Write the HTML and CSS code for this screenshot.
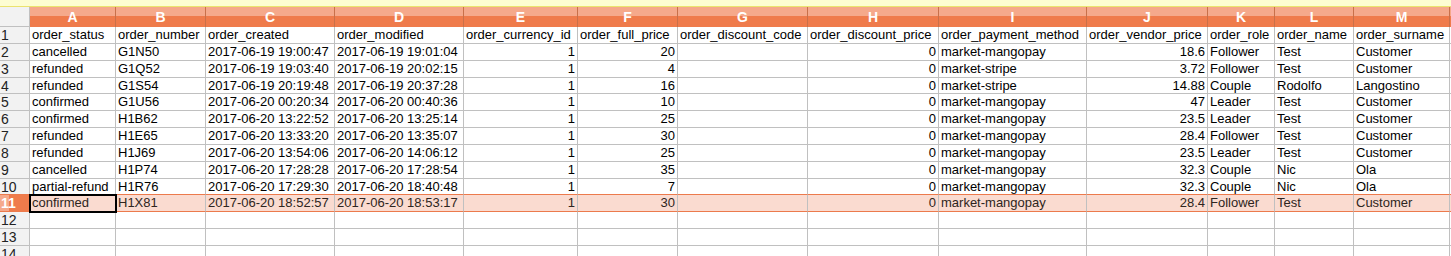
FILE: index.html
```html
<!DOCTYPE html>
<html lang="en">
    <head>
        <meta charset="utf-8">
        <link rel="stylesheet" href="styles.css">
    </head>
    <body>
        <div id="sheet">
            <div class="infobar"></div>
            <div class="row colhead">
                <div class="corner"></div>
                <div>A</div><div>B</div><div>C</div><div>D</div><div>E</div><div>F</div><div>G</div>
                <div>H</div><div>I</div><div>J</div><div>K</div><div>L</div><div>M</div><div></div>
            </div>
            <div class="row">
                <div class="rh">1</div>
                <div>order_status</div><div>order_number</div><div>order_created</div><div>order_modified</div>
                <div>order_currency_id</div><div>order_full_price</div><div>order_discount_code</div><div>order_discount_price</div>
                <div>order_payment_method</div><div>order_vendor_price</div><div>order_role</div><div>order_name</div><div>order_surname</div><div></div>
            </div>
            <div class="row">
                <div class="rh">2</div>
                <div>cancelled</div><div>G1N50</div><div>2017-06-19 19:00:47</div><div>2017-06-19 19:01:04</div>
                <div class="n">1</div><div class="n">20</div><div></div><div class="n">0</div>
                <div>market-mangopay</div><div class="n">18.6</div><div>Follower</div><div>Test</div><div>Customer</div><div></div>
            </div>
            <div class="row">
                <div class="rh">3</div>
                <div>refunded</div><div>G1Q52</div><div>2017-06-19 19:03:40</div><div>2017-06-19 20:02:15</div>
                <div class="n">1</div><div class="n">4</div><div></div><div class="n">0</div>
                <div>market-stripe</div><div class="n">3.72</div><div>Follower</div><div>Test</div><div>Customer</div><div></div>
            </div>
            <div class="row">
                <div class="rh">4</div>
                <div>refunded</div><div>G1S54</div><div>2017-06-19 20:19:48</div><div>2017-06-19 20:37:28</div>
                <div class="n">1</div><div class="n">16</div><div></div><div class="n">0</div>
                <div>market-stripe</div><div class="n">14.88</div><div>Couple</div><div>Rodolfo</div><div>Langostino</div><div></div>
            </div>
            <div class="row">
                <div class="rh">5</div>
                <div>confirmed</div><div>G1U56</div><div>2017-06-20 00:20:34</div><div>2017-06-20 00:40:36</div>
                <div class="n">1</div><div class="n">10</div><div></div><div class="n">0</div>
                <div>market-mangopay</div><div class="n">47</div><div>Leader</div><div>Test</div><div>Customer</div><div></div>
            </div>
            <div class="row">
                <div class="rh">6</div>
                <div>confirmed</div><div>H1B62</div><div>2017-06-20 13:22:52</div><div>2017-06-20 13:25:14</div>
                <div class="n">1</div><div class="n">25</div><div></div><div class="n">0</div>
                <div>market-mangopay</div><div class="n">23.5</div><div>Leader</div><div>Test</div><div>Customer</div><div></div>
            </div>
            <div class="row">
                <div class="rh">7</div>
                <div>refunded</div><div>H1E65</div><div>2017-06-20 13:33:20</div><div>2017-06-20 13:35:07</div>
                <div class="n">1</div><div class="n">30</div><div></div><div class="n">0</div>
                <div>market-mangopay</div><div class="n">28.4</div><div>Follower</div><div>Test</div><div>Customer</div><div></div>
            </div>
            <div class="row">
                <div class="rh">8</div>
                <div>refunded</div><div>H1J69</div><div>2017-06-20 13:54:06</div><div>2017-06-20 14:06:12</div>
                <div class="n">1</div><div class="n">25</div><div></div><div class="n">0</div>
                <div>market-mangopay</div><div class="n">23.5</div><div>Leader</div><div>Test</div><div>Customer</div><div></div>
            </div>
            <div class="row">
                <div class="rh">9</div>
                <div>cancelled</div><div>H1P74</div><div>2017-06-20 17:28:28</div><div>2017-06-20 17:28:54</div>
                <div class="n">1</div><div class="n">35</div><div></div><div class="n">0</div>
                <div>market-mangopay</div><div class="n">32.3</div><div>Couple</div><div>Nic</div><div>Ola</div><div></div>
            </div>
            <div class="row presel">
                <div class="rh">10</div>
                <div>partial-refund</div><div>H1R76</div><div>2017-06-20 17:29:30</div><div>2017-06-20 18:40:48</div>
                <div class="n">1</div><div class="n">7</div><div></div><div class="n">0</div>
                <div>market-mangopay</div><div class="n">32.3</div><div>Couple</div><div>Nic</div><div>Ola</div><div></div>
            </div>
            <div class="row sel">
                <div class="rh">11</div>
                <div class="active">confirmed</div><div>H1X81</div><div>2017-06-20 18:52:57</div><div>2017-06-20 18:53:17</div>
                <div class="n">1</div><div class="n">30</div><div></div><div class="n">0</div>
                <div>market-mangopay</div><div class="n">28.4</div><div>Follower</div><div>Test</div><div>Customer</div><div></div>
            </div>
            <div class="row">
                <div class="rh">12</div>
                <div></div><div></div><div></div><div></div><div></div><div></div><div></div>
                <div></div><div></div><div></div><div></div><div></div><div></div><div></div>
            </div>
            <div class="row">
                <div class="rh">13</div>
                <div></div><div></div><div></div><div></div><div></div><div></div><div></div>
                <div></div><div></div><div></div><div></div><div></div><div></div><div></div>
            </div>
            <div class="row">
                <div class="rh">14</div>
                <div></div><div></div><div></div><div></div><div></div><div></div><div></div>
                <div></div><div></div><div></div><div></div><div></div><div></div><div></div>
            </div>
        </div>
    </body>
</html>
```

FILE: styles.css
```css
*{
	margin: 0;
	padding: 0;
	box-sizing: border-box;
}
body{
	width: 1451px;
	height: 256px;
	overflow: hidden;
	background: #fff;
	font-family: "Liberation Sans", Arial, sans-serif;
	font-size: 13px;
	color: #000;
}
.infobar{
	height: 7px;
	background: #fdfdd2;
	border-bottom: 1px solid #ebe36e;
}
.row{
	display: grid;
	grid-template-columns: 30px 86px 90px 129px 129px 114px 100px 130px 131px 148px 121px 67px 79px 96px 1fr;
	height: 16.85px;
}
.row > div{
	border-right: 1px solid #c0c0c0;
	border-bottom: 1px solid #c0c0c0;
	padding: 0 2px;
	line-height: 16px;
	white-space: nowrap;
	overflow: hidden;
}
.row > .n{
	text-align: right;
}
.row > .rh{
	background: #f2f2f2;
	padding-left: 1px;
	font-size: 14px;
	color: #222;
}
.colhead{
	height: 20px;
	background: linear-gradient(#f5a98b 0, #f5a98b 9px, #ef7b4b 9px);
}
.colhead > div{
	border-right: 1px solid #c97049;
	border-bottom: none;
	color: #fff;
	font-weight: bold;
	font-size: 14px;
	text-align: center;
	line-height: 20px;
}
.colhead > .corner{
	background: #f2f2f2;
	border-right: 1px solid #c0c0c0;
	border-bottom: 1px solid #c0c0c0;
}
.presel > div{
	border-bottom-color: #ec7a4c;
}
.sel > div{
	background: #fadbd0;
	border-bottom-color: #ec7a4c;
	color: #2e2520;
}
.sel > .rh{
	background: linear-gradient(90deg, #f5a98b 0, #f5a98b 9px, #ef7b4b 9px);
	color: #fff;
	font-weight: bold;
}
.sel > .active{
	position: relative;
	outline: 2px solid #000;
	outline-offset: -1px;
	z-index: 1;
}
```
